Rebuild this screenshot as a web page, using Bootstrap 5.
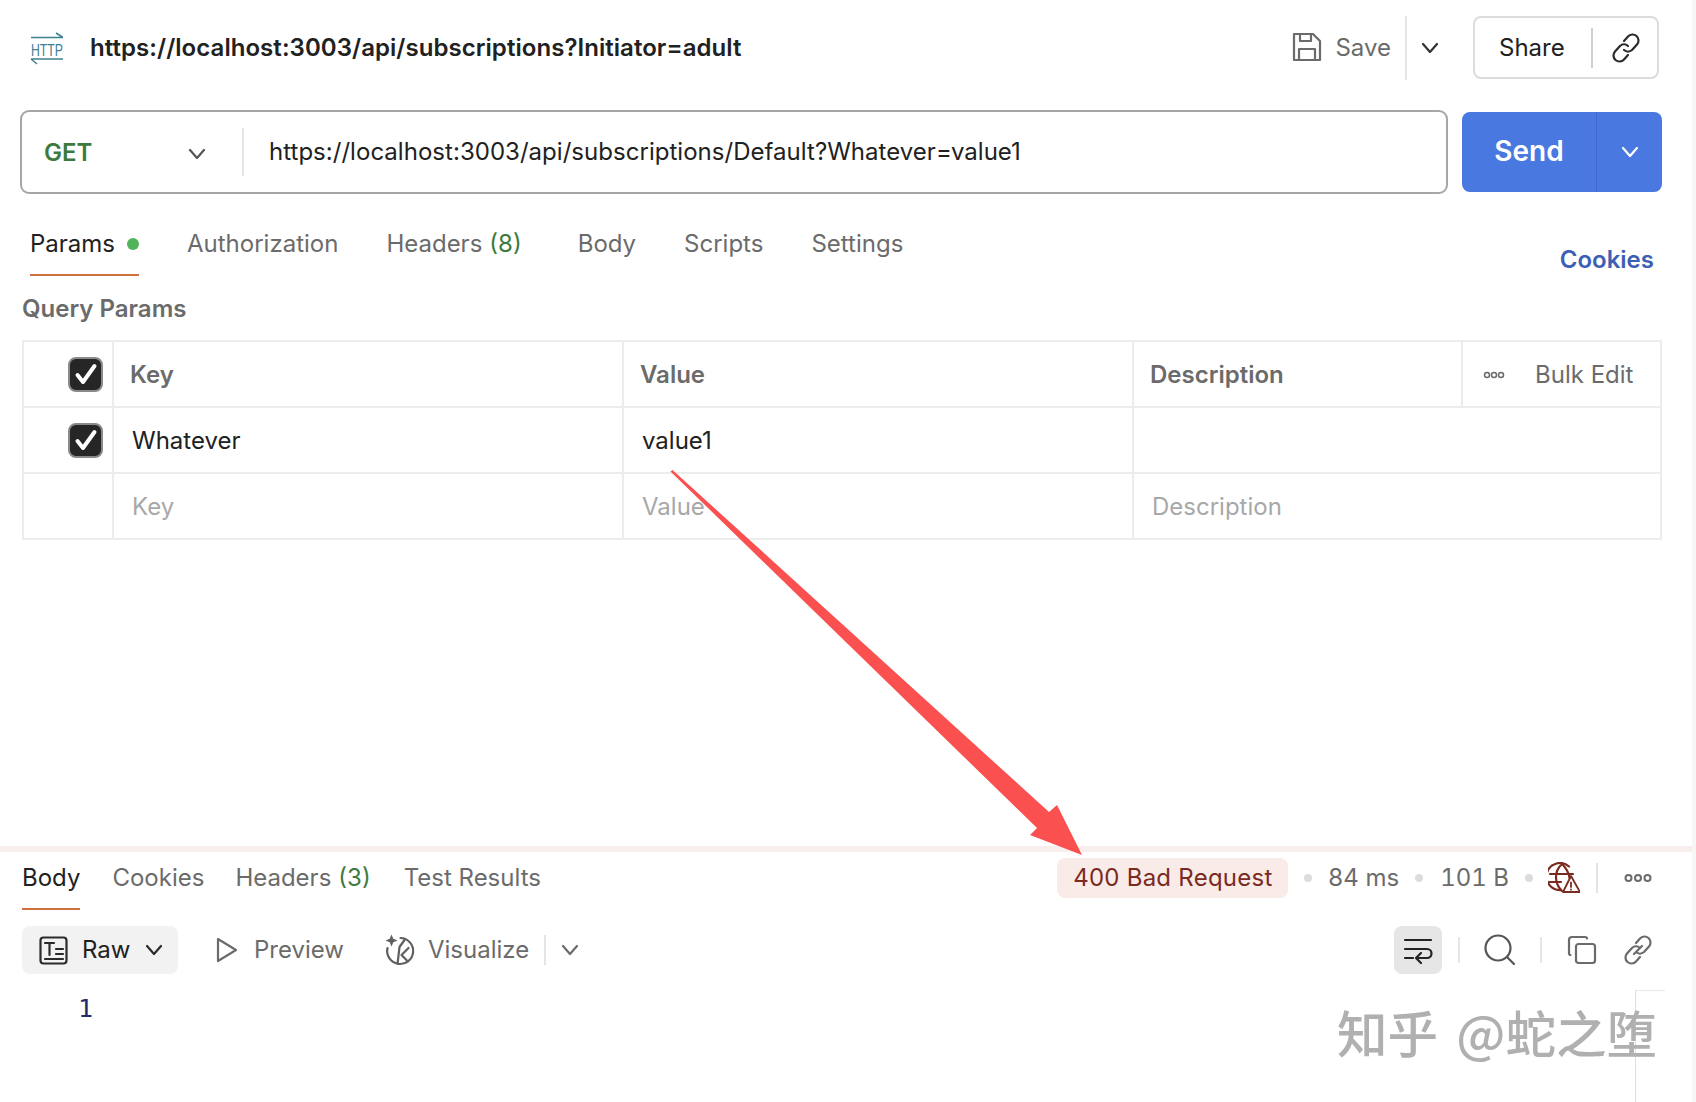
<!DOCTYPE html>
<html lang="en">
<head>
<meta charset="utf-8">
<title>Postman request</title>
<link href="https://cdn.jsdelivr.net/npm/bootstrap@5.3.0/dist/css/bootstrap.min.css" rel="stylesheet">
<style>
html,body{margin:0;background:#fff}
body{font-family:Inter,"Liberation Sans",sans-serif;font-size:24px;color:#212121;line-height:1.2}
.pm-app{position:relative;width:1696px;height:1102px;overflow:hidden;border-right:4px solid #f6f6f6;background:#fff}
svg{display:block;flex:none}
.ic{fill:none;stroke:currentColor;stroke-width:2.2;stroke-linecap:round;stroke-linejoin:round}
.pm-head{height:94px;padding:1px 33px 0 30px;margin-bottom:16px}
.pm-title{font-weight:600;margin-left:26px;padding-top:2px;color:#212121;letter-spacing:.05px}
.pm-drop{padding-top:2px}
.pm-save{color:#6b6b6b}
.pm-vr{width:2px;background:#e6e6e6;flex:none}
.pm-share{width:186px;height:63px;border:2px solid #dcdcdc;border-radius:8px;margin-left:34px}
.pm-urlrow{padding:0 30px 0 20px;height:84px}
.pm-url{width:1428px;height:84px;flex:none;border:2px solid #a6a6a6;border-radius:9px}
.pm-method{width:222px;padding-left:22px;padding-top:3px;color:#3c7a3e;font-weight:600}
.pm-urltext{padding-left:25px;color:#212121;letter-spacing:.03px}
.pm-send{width:200px;height:80px;margin-left:14px;background:#4878e0;border-radius:8px;color:#fff;font-size:28px;font-weight:600}
.pm-send-main{width:135px;border-right:1px solid #3f6ccc}
.pm-tabs{height:82px;padding:0 38px 0 30px}
.pm-tab{color:#6b6b6b;height:100%;display:flex;align-items:center;white-space:nowrap}
.pm-tab.on{color:#212121;border-bottom:2px solid #d0703c}
.pm-num{color:#3c7a3e;margin-left:7px}
.pm-dot{width:12px;height:12px;border-radius:50%;background:#4fb35a;margin-left:12px}
.pm-cookies{color:#3d5fb4;font-weight:600;align-self:flex-end;height:31px;line-height:31px;margin-bottom:1px;margin-top:auto}
.pm-qp{color:#6b6b6b;font-weight:600;font-size:24px;margin:18px 0 0 22px;height:46px;line-height:29px}
.pm-table{table-layout:fixed;width:1638px;margin:0 0 0 22px;border-collapse:collapse}
.pm-table td,.pm-table th{height:66px;padding:2px 0 0 18px;border:2px solid #ececec;vertical-align:middle;font-weight:400;color:#212121;box-shadow:none;background:none}
.pm-table th{font-weight:600;color:#6b6b6b;padding-left:16px}
.pm-table td.pm-ph{color:#a8a8a8;padding-left:18px}
.pm-chk{width:35px;height:35px;border-radius:8px;background:#262626;border:2px solid #8a8a8a;margin:0 0 0 44px;display:flex;align-items:center;justify-content:center}
.pm-table td.pm-c0,.pm-table th.pm-c0{padding:0}
.pm-table th.pm-bulk{color:#6b6b6b;font-weight:400;padding-left:17px}
.pm-respdiv{position:absolute;left:0;right:0;top:846px;height:6px;background:#f8eeee}
.pm-resp{position:absolute;left:0;right:0;top:852px;bottom:0}
.pm-rtabs{height:58px;padding:0 40px 0 22px}
.pm-rtabs .pm-tab{padding-bottom:6px}
.pm-rtabs .pm-tab.on{padding-bottom:4px}
.pm-rstat{padding-bottom:6px}
.pm-chip{height:40px;width:231px;background:#f9ebe7;border-radius:8px;color:#7a2a1e;display:flex;align-items:center;justify-content:center;letter-spacing:.25px}
.pm-mut{color:#6b6b6b}
.pm-tnum{font-feature-settings:"tnum"}
.pm-sep{width:8px;height:8px;border-radius:50%;background:#dcdcdc;flex:none}
.pm-rbar{height:48px;margin-top:16px;padding:0 39px 0 22px}
.pm-raw{width:156px;height:48px;background:#f2f2f2;border-radius:8px;padding-left:17px}
.pm-wrap{width:48px;height:48px;background:#e6e6e6;border-radius:8px}
.pm-ln{font-family:"DejaVu Sans Mono","Liberation Mono",monospace;font-size:25px;color:#232a6e;margin:20px 0 0 78px}
.pm-gut{position:absolute;left:1635px;top:990px;width:30px;height:112px;border-left:1px solid #dedede;border-top:1px solid #e8e8e8}
.pm-mark{position:absolute;left:1337px;top:998px;font-family:"Noto Sans CJK SC",sans-serif;font-size:50.5px;line-height:66px;color:#b0b0b0;font-weight:500;white-space:nowrap;word-spacing:7px}
.pm-arrow{position:absolute;left:0;top:0;pointer-events:none}
.pm-logo{overflow:visible}
</style>
</head>
<body>
<div class="pm-app">

  <div class="pm-head d-flex align-items-center">
    <svg class="pm-logo" width="34" height="32" viewBox="0 0 34 32" style="color:#3f8090">
      <path d="M1 5.500H33M26 1l7 4.500M1 27H33M1 27l6 5" fill="none" stroke="currentColor" stroke-width="1.500"/>
      <text x="1" y="24" font-family="Liberation Sans" font-size="17" textLength="32" lengthAdjust="spacingAndGlyphs" fill="currentColor">HTTP</text>
    </svg>
    <div class="pm-title">https://localhost:3003/api/subscriptions?Initiator=adult</div>
    <div class="ms-auto d-flex align-items-center">
      <div class="pm-save d-flex align-items-center">
        <svg class="ic" width="30" height="30" viewBox="0 0 30 30"><path d="M2 2H21L28 9V28H2ZM8 2V9H19V2M7 28V17H23V28"/></svg>
        <span class="pm-drop" style="margin-left:13px">Save</span>
      </div>
      <div class="pm-vr" style="height:64px;margin-left:14px"></div>
      <svg class="ic" style="margin-left:14px;color:#333" width="18" height="12" viewBox="0 0 18 12"><path d="M2 2l7 8 7-8"/></svg>
      <div class="pm-share d-flex align-items-center">
        <span class="pm-drop" style="margin-left:24px">Share</span>
        <div class="pm-vr" style="height:40px;margin-left:26px;background:#cfcfcf"></div>
        <svg class="ic" style="margin-left:18px;color:#2b2b2b" width="30" height="30" viewBox="0 0 30 30"><path d="M13 8l4-4.500a6 6 0 0 1 9 8l-5 5.500a6 6 0 0 1-8 0M17 22l-4 4.500a6 6 0 0 1-9-8l5-5.500a6 6 0 0 1 8 0"/></svg>
      </div>
    </div>
  </div>

  <div class="pm-urlrow d-flex align-items-center">
    <div class="pm-url d-flex align-items-center">
      <div class="pm-method d-flex align-items-center" style="height:48px;border-right:2px solid #e6e6e6">
        <span>GET</span>
        <svg class="ic" style="margin-left:auto;margin-right:36px;color:#555" width="18" height="12" viewBox="0 0 18 12"><path d="M2 2l7 8 7-8"/></svg>
      </div>
      <div class="pm-urltext">https://localhost:3003/api/subscriptions/Default?Whatever=value1</div>
    </div>
    <div class="pm-send d-flex align-items-stretch">
      <div class="pm-send-main d-flex align-items-center justify-content-center">Send</div>
      <div class="flex-fill d-flex align-items-center justify-content-center">
        <svg class="ic" width="18" height="12" viewBox="0 0 18 12"><path d="M2 2l7 8 7-8"/></svg>
      </div>
    </div>
  </div>

  <div class="pm-tabs d-flex align-items-stretch">
    <div class="pm-tab on" style="height:82px;padding-top:20px">Params<span class="pm-dot"></span></div>
    <div class="pm-tab" style="margin-left:48px;padding-top:18px">Authorization</div>
    <div class="pm-tab" style="margin-left:48px;padding-top:18px">Headers<span class="pm-num">(8)</span></div>
    <div class="pm-tab" style="margin-left:56px;padding-top:18px">Body</div>
    <div class="pm-tab" style="margin-left:48px;padding-top:18px">Scripts</div>
    <div class="pm-tab" style="margin-left:48px;padding-top:18px">Settings</div>
    <div class="pm-cookies ms-auto">Cookies</div>
  </div>

  <div class="pm-qp">Query Params</div>

  <table class="pm-table">
    <colgroup><col style="width:90px"><col style="width:510px"><col style="width:510px"><col style="width:329px"><col style="width:199px"></colgroup>
    <tr>
      <th class="pm-c0"><div class="pm-chk"><svg width="24" height="24" viewBox="0 0 24 24" fill="none" stroke="#fff" stroke-width="4" stroke-linecap="round" stroke-linejoin="round"><path d="M3.500 13l5.500 7L20.500 4"/></svg></div></th>
      <th>Key</th>
      <th>Value</th>
      <th>Description</th>
      <th class="pm-bulk"><div class="d-flex align-items-center" style="padding-left:3px">
        <svg width="22" height="8" viewBox="0 0 22 8" fill="none" stroke="#6b6b6b" stroke-width="1.500"><circle cx="4" cy="4" r="2.500"/><circle cx="11" cy="4" r="2.500"/><circle cx="18" cy="4" r="2.500"/></svg>
        <span style="margin-left:30px">Bulk Edit</span></div></th>
    </tr>
    <tr>
      <td class="pm-c0"><div class="pm-chk"><svg width="24" height="24" viewBox="0 0 24 24" fill="none" stroke="#fff" stroke-width="4" stroke-linecap="round" stroke-linejoin="round"><path d="M3.500 13l5.500 7L20.500 4"/></svg></div></td>
      <td>Whatever</td>
      <td>value1</td>
      <td colspan="2"></td>
    </tr>
    <tr>
      <td class="pm-c0"></td>
      <td class="pm-ph">Key</td>
      <td class="pm-ph">Value</td>
      <td class="pm-ph" colspan="2">Description</td>
    </tr>
  </table>

  <div class="pm-respdiv"></div>

  <div class="pm-resp">
    <div class="pm-rtabs d-flex align-items-stretch">
      <div class="pm-tab on">Body</div>
      <div class="pm-tab" style="margin-left:32px">Cookies</div>
      <div class="pm-tab" style="margin-left:31px">Headers<span class="pm-num">(3)</span></div>
      <div class="pm-tab" style="margin-left:33px">Test Results</div>
      <div class="pm-rstat ms-auto d-flex align-items-center">
        <div class="pm-chip">400 Bad Request</div>
        <span class="pm-sep" style="margin-left:16px"></span>
        <span class="pm-mut" style="margin-left:16px">84 ms</span>
        <span class="pm-sep" style="margin-left:16px"></span>
        <span class="pm-mut pm-tnum" style="margin-left:17px">101 B</span>
        <span class="pm-sep" style="margin-left:16px"></span>
        <svg class="ic" style="margin-left:15px;color:#7a2a1e" width="32" height="32" viewBox="0 0 32 32" stroke-width="2"><path d="M21 4.500A13.500 13.500 0 1 0 13 28M2 12H25M1.500 20H13M14 2C6 9 6 21 14 29M14 2C19 7 21 11 21.500 16"/><path d="M23 14L32 30H15ZM23 20.500V25M23 27.500v.2" stroke-width="1.800"/></svg>
        <div class="pm-vr" style="height:30px;margin-left:16px;background:#e4e4e4"></div>
        <svg style="margin-left:26px" width="28" height="10" viewBox="0 0 28 10" fill="none" stroke="#6b6b6b" stroke-width="2"><circle cx="4.500" cy="5" r="3"/><circle cx="14" cy="5" r="3"/><circle cx="23.500" cy="5" r="3"/></svg>
      </div>
    </div>

    <div class="pm-rbar d-flex align-items-center">
      <div class="pm-raw d-flex align-items-center">
        <svg class="ic" style="color:#2b2b2b" width="29" height="29" viewBox="0 0 29 29"><rect x="1.500" y="1.500" width="26" height="26" rx="3"/><path d="M6 7H15M10.500 7V19M17 13H24M17 18H24M6 23H24"/></svg>
        <span style="margin-left:14px">Raw</span>
        <svg class="ic" style="margin-left:15px;color:#2b2b2b" width="18" height="12" viewBox="0 0 18 12"><path d="M2 2l7 8 7-8"/></svg>
      </div>
      <svg class="ic" style="margin-left:38px;color:#6b6b6b" width="22" height="26" viewBox="0 0 22 26"><path d="M2 2L20 13L2 24Z"/></svg>
      <span class="pm-mut" style="margin-left:16px">Preview</span>
      <svg class="ic" style="margin-left:39px;color:#5f5f5f" width="33" height="34" viewBox="0 0 32 34" stroke-width="2"><path d="M17 5a13 13 0 1 1-13 10M21 7L16 14l-2 17M25 15l-7 7 5 5"/><path d="M8 1.500l1.800 4.200 4.200 1.800-4.200 1.800L8 13.500 6.200 9.300 2 7.500l4.200-1.800Z" fill="currentColor" stroke="none"/></svg>
      <span class="pm-mut" style="margin-left:12px">Visualize</span>
      <div class="pm-vr" style="height:30px;margin-left:15px"></div>
      <svg class="ic" style="margin-left:15px;color:#6b6b6b" width="18" height="12" viewBox="0 0 18 12"><path d="M2 2l7 8 7-8"/></svg>
      <div class="ms-auto d-flex align-items-center">
        <div class="pm-wrap d-flex align-items-center justify-content-center">
          <svg class="ic" style="color:#222" width="30" height="30" viewBox="0 0 30 30"><path d="M2 5H28M2 14H24a4.500 4.500 0 0 1 0 9H14M2 23H10M18 18l-5 5 5 5"/></svg>
        </div>
        <div class="pm-vr" style="height:26px;margin-left:16px"></div>
        <svg class="ic" style="margin-left:24px;color:#555" width="32" height="32" viewBox="0 0 32 32"><circle cx="14" cy="14" r="12.500"/><path d="M23 23l7 7"/></svg>
        <div class="pm-vr" style="height:26px;margin-left:24px"></div>
        <svg class="ic" style="margin-left:25px;color:#6b6b6b" width="30" height="30" viewBox="0 0 30 30"><rect x="9" y="9" width="19" height="19" rx="2.500"/><path d="M20 3.500Q20 2 18 2H5Q2 2 2 5V18Q2 20 3.500 20"/></svg>
        <svg class="ic" style="margin-left:26px;color:#6b6b6b" width="30" height="30" viewBox="0 0 30 30"><path d="M13 8l4-4.500a6 6 0 0 1 9 8l-5 5.500a6 6 0 0 1-8 0M17 22l-4 4.500a6 6 0 0 1-9-8l5-5.500a6 6 0 0 1 8 0M11 19l8-8"/></svg>
      </div>
    </div>

    <div class="pm-ln">1</div>
  </div>

  <div class="pm-gut"></div>
  <div class="pm-mark">知乎 @蛇之堕</div>

  <svg class="pm-arrow" width="1696" height="1102" viewBox="0 0 1696 1102"><path d="M670.500 471.500L672.500 470L1049 812 1057 805 1082 855 1030 835 1037 828Z" fill="#fb5050"/></svg>
</div>
</body>
</html>
